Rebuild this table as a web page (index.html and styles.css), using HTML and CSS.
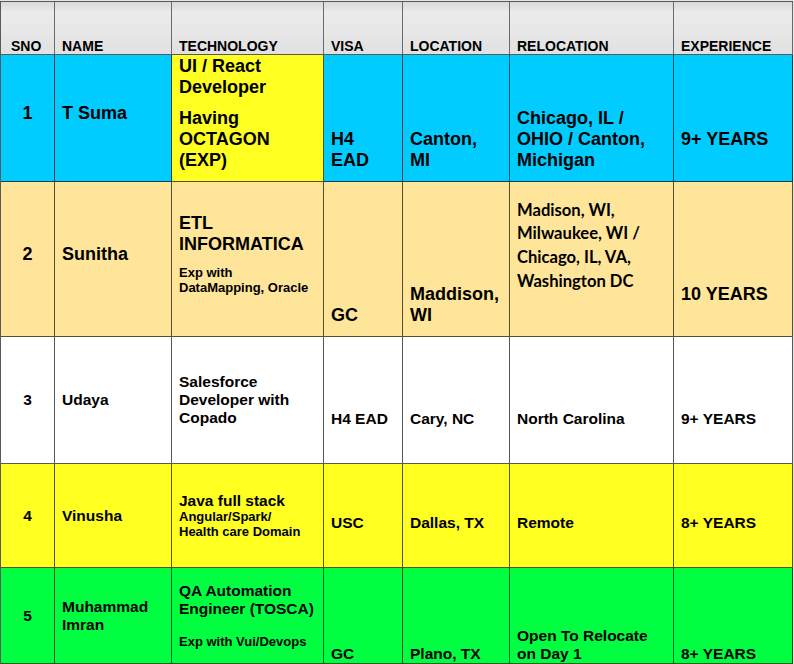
FILE: index.html
```html
<!DOCTYPE html>
<html lang="en">
<head>
<meta charset="utf-8">
<title>Consultants</title>
<link rel="stylesheet" href="styles.css">
</head>
<body>
<div class="sheet">
  <div class="row rh">
    <div class="cell hd first">SNO</div>
    <div class="cell hd">NAME</div>
    <div class="cell hd">TECHNOLOGY</div>
    <div class="cell hd">VISA</div>
    <div class="cell hd">LOCATION</div>
    <div class="cell hd">RELOCATION</div>
    <div class="cell hd">EXPERIENCE</div>
  </div>

  <div class="row r1">
    <div class="cell mid num"><p>1</p></div>
    <div class="cell mid"><p>T Suma</p></div>
    <div class="cell top yellow tech1">
      <p>UI / React<br>Developer</p>
      <p class="gap">Having<br>OCTAGON<br>(EXP)</p>
    </div>
    <div class="cell bot"><p>H4<br>EAD</p></div>
    <div class="cell bot"><p>Canton,<br>MI</p></div>
    <div class="cell bot"><p>Chicago, IL /<br>OHIO / Canton,<br>Michigan</p></div>
    <div class="cell bot exp"><p>9+ YEARS</p></div>
  </div>

  <div class="row r2">
    <div class="cell mid num"><p>2</p></div>
    <div class="cell mid"><p>Sunitha</p></div>
    <div class="cell mid">
      <p>ETL<br>INFORMATICA</p>
      <p class="note gap2">Exp with<br>DataMapping, Oracle</p>
    </div>
    <div class="cell bot"><p>GC</p></div>
    <div class="cell bot"><p>Maddison,<br>WI</p></div>
    <div class="cell top reloc2"><p>Madison, WI,<br>Milwaukee, WI /<br>Chicago, IL, VA,<br>Washington DC</p></div>
    <div class="cell bot exp"><p>10 YEARS</p></div>
  </div>

  <div class="row r3">
    <div class="cell mid num"><p>3</p></div>
    <div class="cell mid"><p>Udaya</p></div>
    <div class="cell mid"><p>Salesforce<br>Developer with<br>Copado</p></div>
    <div class="cell bot"><p>H4 EAD</p></div>
    <div class="cell bot"><p>Cary, NC</p></div>
    <div class="cell bot"><p>North Carolina</p></div>
    <div class="cell bot"><p>9+ YEARS</p></div>
  </div>

  <div class="row r4">
    <div class="cell mid num"><p>4</p></div>
    <div class="cell mid"><p>Vinusha</p></div>
    <div class="cell mid">
      <p>Java full stack</p>
      <p class="note">Angular/Spark/<br>Health care Domain</p>
    </div>
    <div class="cell bot"><p>USC</p></div>
    <div class="cell bot"><p>Dallas, TX</p></div>
    <div class="cell bot"><p>Remote</p></div>
    <div class="cell bot"><p>8+ YEARS</p></div>
  </div>

  <div class="row r5">
    <div class="cell mid num"><p>5</p></div>
    <div class="cell mid"><p>Muhammad<br>Imran</p></div>
    <div class="cell mid">
      <p>QA Automation<br>Engineer (TOSCA)</p>
      <p class="note gap3">Exp with Vui/Devops</p>
    </div>
    <div class="cell bot"><p>GC</p></div>
    <div class="cell bot"><p>Plano, TX</p></div>
    <div class="cell bot"><p>Open To Relocate<br>on Day 1</p></div>
    <div class="cell bot"><p>8+ YEARS</p></div>
  </div>
</div>
</body>
</html>
```
FILE: styles.css
```css
html, body {
  margin: 0;
  padding: 0;
}

body {
  background: #e4e4e4;
  width: 794px;
  height: 664px;
  overflow: hidden;
}

.sheet {
  margin-top: 1px;
  width: 793px;
  box-sizing: border-box;
  border-left: 1px solid #5a5a5a;
  border-top: 1px solid #5a5a5a;
  display: grid;
  grid-template-columns: 54px 117px 152px 79px 107px 164px 119px;
  grid-template-rows: 53px 127px 155px 127px 104px 96px;
  font-family: "Liberation Sans", Arial, sans-serif;
  font-weight: 700;
  color: #000;
}

.row {
  display: contents;
}

.cell {
  box-sizing: border-box;
  display: flex;
  flex-direction: column;
  padding: 0 7px;
  border-right: 1px solid rgba(0, 0, 0, 0.66);
  border-bottom: 1px solid rgba(0, 0, 0, 0.66);
  font-size: 18px;
  line-height: 20.7px;
  white-space: nowrap;
  min-width: 0;
}

.cell p {
  margin: 0;
}

.top { justify-content: flex-start; }
.mid { justify-content: center; }
.bot { justify-content: flex-end; }
.num { text-align: center; }

/* header */
.hd {
  justify-content: flex-end;
  font-size: 14px;
  line-height: 16px;
  background: linear-gradient(to bottom, #d9d9d9 0px, #ebebeb 10px, #e7e7e7 30px, #e1e1e1 100%);
  border-right-color: #6a6a6a;
  border-bottom-color: #5a5a5a;
}
.hd.first { padding-left: 10px; }

/* row colours */
.r1 > .cell { background: #00ccff; }
.r2 > .cell { background: #ffe599; }
.r3 > .cell { background: #ffffff; }
.r4 > .cell { background: #ffff22; }
.r5 > .cell { background: #00ff41; }
.r1 > .cell.yellow { background: #ffff22; }

/* rows 1-2 : large type */
.r1 > .mid,
.r2 > .mid { padding-bottom: 10px; }
.r1 > .bot,
.r2 > .bot { padding-bottom: 10.5px; }
.r1 > .exp,
.r2 > .exp { padding-bottom: 31.5px; }

.r1 > .tech1 { padding-top: 1px; }
.cell .gap { margin-top: 11px; }
.cell .gap2 { margin-top: 10px; }
.cell .gap3 { margin-top: 17px; }

.r2 > .reloc2 {
  padding-top: 16.5px;
  font-family: Lato, "Liberation Sans", sans-serif;
  font-size: 16.6px;
  line-height: 23.9px;
}

/* rows 3-5 : smaller type */
.r3 > .cell,
.r4 > .cell,
.r5 > .cell {
  font-size: 15.5px;
  line-height: 17.8px;
}
.r3 > .bot,
.r4 > .bot { padding-bottom: 35.5px; }
.r5 > .bot { padding-bottom: 0.5px; }

.cell .note {
  font-size: 13px;
  line-height: 15px;
}
```
